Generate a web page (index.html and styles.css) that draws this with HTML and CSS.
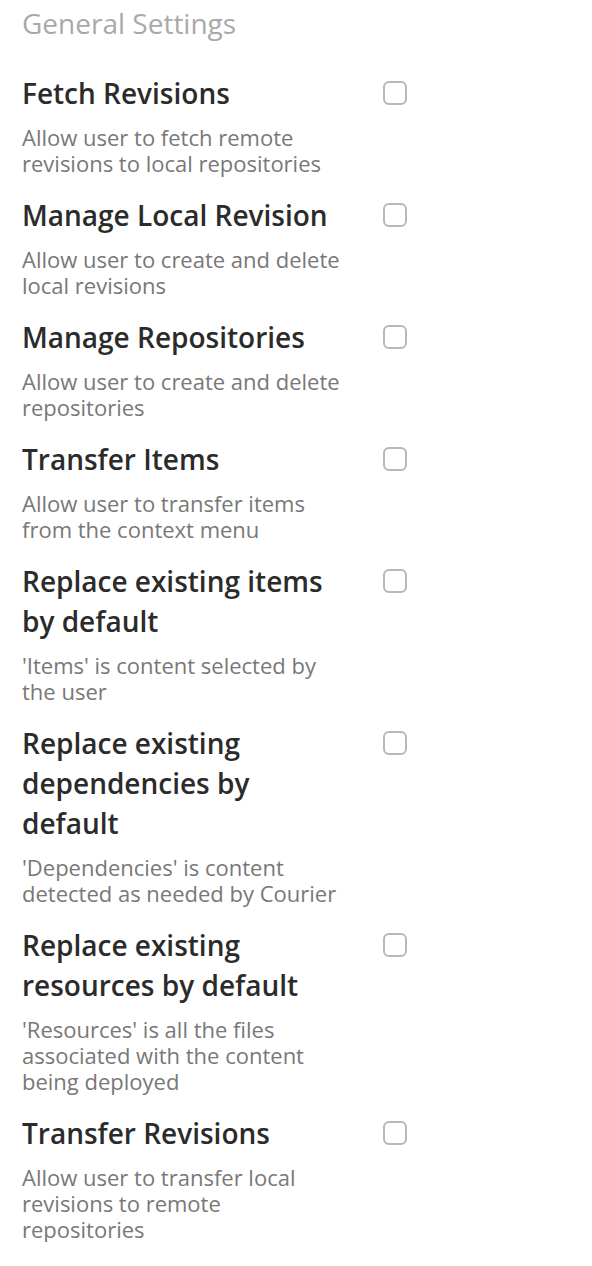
FILE: index.html
```html
<!DOCTYPE html>
<html>
<head>
<meta charset="utf-8">
<link rel="stylesheet" href="styles.css">
</head>
<body>
<div class="page">
  <h1 class="heading">General Settings</h1>
  <div class="list">
    <div class="setting">
      <div class="text">
        <div class="title">Fetch Revisions</div>
        <div class="desc">Allow user to fetch remote revisions to local repositories</div>
      </div>
      <input class="check" type="checkbox">
    </div>
    <div class="setting">
      <div class="text">
        <div class="title">Manage Local Revision</div>
        <div class="desc">Allow user to create and delete local revisions</div>
      </div>
      <input class="check" type="checkbox">
    </div>
    <div class="setting">
      <div class="text">
        <div class="title">Manage Repositories</div>
        <div class="desc">Allow user to create and delete repositories</div>
      </div>
      <input class="check" type="checkbox">
    </div>
    <div class="setting">
      <div class="text">
        <div class="title">Transfer Items</div>
        <div class="desc">Allow user to transfer items from the context menu</div>
      </div>
      <input class="check" type="checkbox">
    </div>
    <div class="setting">
      <div class="text">
        <div class="title">Replace existing items by default</div>
        <div class="desc">'Items' is content selected by the user</div>
      </div>
      <input class="check" type="checkbox">
    </div>
    <div class="setting">
      <div class="text">
        <div class="title">Replace existing dependencies by default</div>
        <div class="desc">'Dependencies' is content detected as needed by Courier</div>
      </div>
      <input class="check" type="checkbox">
    </div>
    <div class="setting">
      <div class="text">
        <div class="title">Replace existing resources by default</div>
        <div class="desc">'Resources' is all the files associated with the content being deployed</div>
      </div>
      <input class="check" type="checkbox">
    </div>
    <div class="setting">
      <div class="text">
        <div class="title">Transfer Revisions</div>
        <div class="desc">Allow user to transfer local revisions to remote repositories</div>
      </div>
      <input class="check" type="checkbox">
    </div>
  </div>
</div>
</body>
</html>
```
FILE: styles.css
```css
html, body {
  margin: 0;
  padding: 0;
  background: #ffffff;
}
body {
  font-family: "Open Sans", "Noto Sans", sans-serif;
}
.page {
  padding: 3px 22px 0 22px;
}
.heading {
  margin: 0;
  font-size: 28px;
  line-height: 40px;
  font-weight: 400;
  color: #a9a9a9;
}
.list {
  display: flex;
  flex-direction: column;
  gap: 19px;
  margin-top: 30px;
}
.setting {
  display: grid;
  grid-template-columns: 320px 24px;
  column-gap: 41px;
  align-items: start;
}
.text {
  display: flex;
  flex-direction: column;
  gap: 11px;
}
.title {
  font-size: 28px;
  line-height: 40px;
  font-weight: 600;
  color: #2b2b2b;
}
.desc {
  font-size: 22px;
  line-height: 26px;
  color: #787878;
}
.check {
  -webkit-appearance: none;
  appearance: none;
  margin: 8px 0 0 0;
  width: 24px;
  height: 24px;
  box-sizing: border-box;
  border: 2px solid #b8b8b8;
  border-radius: 6px;
  background: #fff;
}
```
